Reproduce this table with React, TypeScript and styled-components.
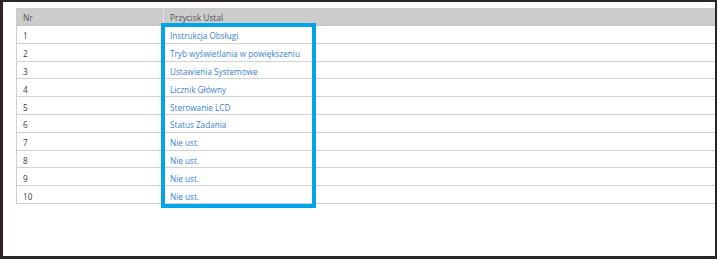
import React from "react";
import styled, { createGlobalStyle } from "styled-components";

const Global = createGlobalStyle`
  html, body { margin: 0; padding: 0; background: #ffffff; }
  body { font-family: "Open Sans", "Liberation Sans", sans-serif; }
`;

const Frame = styled.div`
  box-sizing: border-box;
  width: 717px;
  height: 259px;
  border-top: 2px solid #2d2424;
  border-left: 3px solid #2d2424;
  border-right: 2px solid #2d2424;
  border-bottom: 3px solid #2d2424;
  padding: 6px 0 0 13px;
  background: #ffffff;
`;

const TableWrap = styled.div`
  position: relative;
`;

const Table = styled.div`
  display: grid;
  grid-template-columns: 147px 1fr;
  font-size: 8.2px;
  color: #333333;
`;

const HeadCell = styled.div<{ $divider?: boolean }>`
  height: 18px;
  display: flex;
  align-items: center;
  padding-left: ${(p) => (p.$divider ? "6px" : "7px")};
  padding-top: 1px;
  font-size: 8.4px;
  background: #cccccc;
  color: #555555;
  border-bottom: 1px solid #c2c2c2;
  box-sizing: border-box;
  border-left: ${(p) => (p.$divider ? "1px solid #e2e2e2" : "none")};
`;

const Cell = styled.div<{ $first?: boolean; $link?: boolean }>`
  height: 17.8px;
  box-sizing: border-box;
  display: flex;
  align-items: center;
  padding-left: ${(p) => (p.$first ? "6px" : "7px")};
  padding-top: 3px;
  border-bottom: 1px solid #d2d2d2;
  border-left: ${(p) => (p.$first ? "1px solid #cfcfcf" : "none")};
  color: ${(p) => (p.$link ? "#3a82d6" : "#3a3a3a")};
  white-space: nowrap;
`;

const Highlight = styled.div`
  position: absolute;
  left: 145px;
  top: 15px;
  width: 155px;
  height: 185px;
  box-sizing: border-box;
  border: 4px solid #00a4e8;
  pointer-events: none;
`;

const buttons = [
  "Instrukcja Obsługi",
  "Tryb wyświetlania w powiększeniu",
  "Ustawienia Systemowe",
  "Licznik Główny",
  "Sterowanie LCD",
  "Status Zadania",
  "Nie ust.",
  "Nie ust.",
  "Nie ust.",
  "Nie ust.",
];

export default function App() {
  return (
    <>
      <Global />
      <Frame>
        <TableWrap>
          <Table>
            <HeadCell>Nr</HeadCell>
            <HeadCell $divider>Przycisk Ustal</HeadCell>
            {buttons.map((label, i) => (
              <React.Fragment key={i}>
                <Cell $first>{i + 1}</Cell>
                <Cell $link>{label}</Cell>
              </React.Fragment>
            ))}
          </Table>
          <Highlight />
        </TableWrap>
      </Frame>
    </>
  );
}
